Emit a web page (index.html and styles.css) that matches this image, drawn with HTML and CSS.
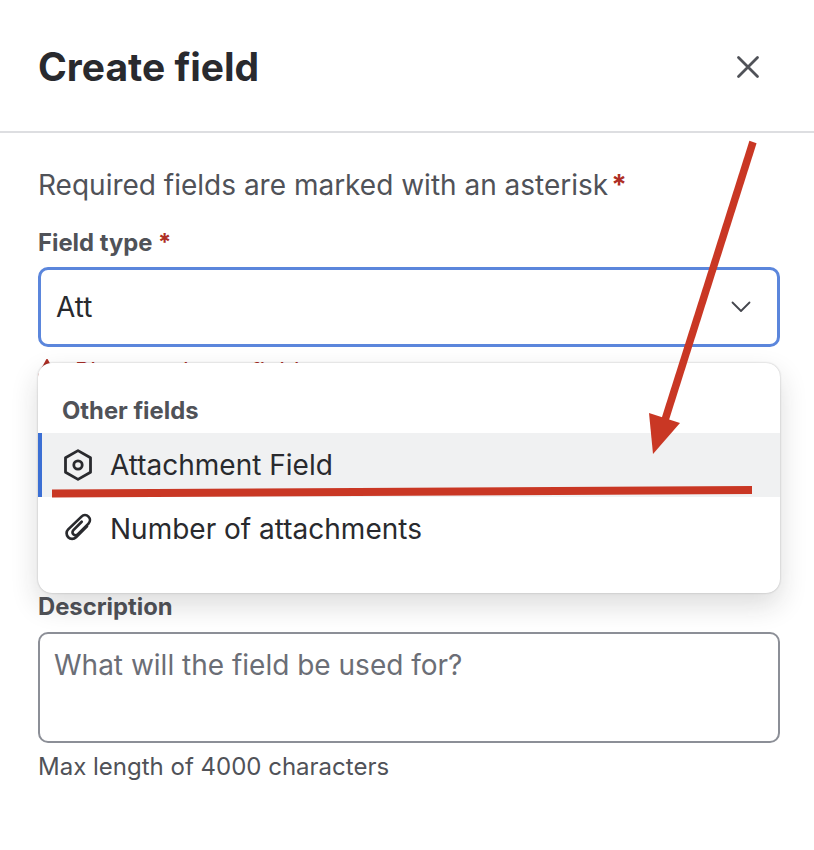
FILE: index.html
```html
<!DOCTYPE html>
<html lang="en">
<head>
    <meta charset="UTF-8">
    <meta name="viewport" content="width=device-width, initial-scale=1.0">
    <title>Create field</title>
    <link rel="stylesheet" href="styles.css">
</head>
<body>

    <div class="header">
        <h1>Create field</h1>
        <button class="close-btn" aria-label="Close">
            <svg width="24" height="24" viewBox="0 0 24 24" fill="none" stroke="#505258" stroke-width="2.8" stroke-linecap="round">
                <path d="M2.5 2.5 L21.5 21.5 M21.5 2.5 L2.5 21.5"/>
            </svg>
        </button>
    </div>

    <div class="content">
        <p class="required-note">Required fields are marked with an asterisk<span class="star first-star">*</span></p>

        <label class="label">Field type <span class="star">*</span></label>
        <div class="select">
            <span>Att</span>
            <svg width="20" height="12" viewBox="0 0 20 12" fill="none" stroke="#44464d" stroke-width="1.8" stroke-linecap="round" stroke-linejoin="round">
                <path d="M1.5 1.5 L10 10 L18.5 1.5"/>
            </svg>
        </div>

        <div class="error">
            <svg width="18" height="18" viewBox="0 0 18 18"><path d="M9 1 L17.5 17 H.5 Z" fill="#ae2e24" stroke="#ae2e24" stroke-linejoin="round" stroke-width="2"/></svg>
            <span>Please select a field type</span>
        </div>

        <label class="label description-label">Description</label>
        <div class="textarea">What will the field be used for?</div>
        <p class="helper">Max length of 4000 characters</p>

        <!-- Dropdown menu, lies over the form -->
        <div class="menu">
            <div class="menu-title">Other fields</div>
            <div class="menu-item active">
                <svg width="32" height="32" viewBox="0 0 32 32" fill="none" stroke="#292a2e" stroke-width="2.8" stroke-linejoin="round">
                    <path d="M16 1.6 L28.5 8.8 V23.2 L16 30.4 L3.5 23.2 V8.8 Z"/>
                    <circle cx="16" cy="16" r="4.2"/>
                </svg>
                <span>Attachment Field</span>
            </div>
            <div class="menu-item">
                <svg width="32" height="32" viewBox="0 0 32 32" fill="none" stroke="#292a2e" stroke-width="2.7" stroke-linecap="round" stroke-linejoin="round">
                    <path d="M25 13.2 L14 24.2 A5.5 5.5 0 0 1 6.2 16.4 L19.5 3.6 A4.95 4.95 0 0 1 26.5 10.6 L15.7 21.4 A3 3 0 0 1 11.4 17.1 L19.7 8.8"/>
                </svg>
                <span>Number of attachments</span>
            </div>
        </div>
    </div>

    <!-- Red annotation drawn on top of the screenshot -->
    <svg class="annotation" width="814" height="850" viewBox="0 0 814 850">
        <path d="M753 142 L665 420" stroke="#c93724" stroke-width="7.5" fill="none"/>
        <path d="M649 413 L680 423 L653 454 Z" fill="#c93724"/>
        <path d="M52 493.5 L752 490" stroke="#c93724" stroke-width="8" fill="none"/>
    </svg>

</body>
</html>
```

FILE: styles.css
```css
/* General styles */
body {
    margin: 0;
    width: 814px;
    height: 850px;
    position: relative;
    overflow: hidden;
    background: #ffffff;
    font-family: Inter, "Liberation Sans", sans-serif;
    color: #292a2e;
}

/* Header */
.header {
    height: 133px;
    box-sizing: border-box;
    padding: 2px 54px 0 38px;
    display: flex;
    justify-content: space-between;
    align-items: center;
    border-bottom: 2px solid #dddee1;
}

h1 {
    margin: 0;
    font-size: 39px;
    font-weight: 700;
    color: #292a2e;
}

.close-btn {
    display: flex;
    padding: 0;
    border: none;
    background: none;
}

/* Form */
.content {
    position: relative;
    padding: 0 34px 0 38px;
}

.required-note {
    margin: 0;
    padding-top: 35px;
    font-size: 28px;
    line-height: 34px;
    color: #505258;
}

.star {
    color: #ae2e24;
    font-weight: 700;
}

.first-star {
    margin-left: 3px;
}

.label {
    display: block;
    font-size: 23.8px;
    font-weight: 700;
    line-height: 28px;
    color: #505258;
}

.required-note + .label {
    margin-top: 27px;
}

.select {
    margin-top: 10px;
    height: 80px;
    box-sizing: border-box;
    padding: 0 26px 0 15px;
    display: flex;
    justify-content: space-between;
    align-items: center;
    border: 3px solid #5b86dc;
    border-radius: 10px;
    font-size: 28px;
}

.error {
    margin-top: 9px;
    height: 24px;
    display: flex;
    align-items: flex-start;
    gap: 19px;
    font-size: 23.8px;
    line-height: 29px;
    color: #ae2e24;
}

.error svg {
    margin-top: 3px;
}

.error span {
    margin-top: 1px;
}

.description-label {
    margin-top: 213px;
}

.textarea {
    margin-top: 11px;
    height: 111px;
    box-sizing: border-box;
    padding: 14px 14px;
    border: 2px solid #8c8f97;
    border-radius: 10px;
    font-size: 28px;
    line-height: 34px;
    color: #6b6e76;
}

.helper {
    margin: 10px 0 0;
    font-size: 24px;
    line-height: 28px;
    color: #505258;
}

/* Dropdown menu */
.menu {
    position: absolute;
    top: 230px;
    left: 38px;
    right: 34px;
    height: 230px;
    box-sizing: border-box;
    padding-top: 34px;
    background: #ffffff;
    border-radius: 14px;
    box-shadow: 0 0 2px rgba(30, 31, 33, 0.3), 0 12px 28px rgba(30, 31, 33, 0.16);
}

.menu-title {
    padding-left: 24px;
    height: 36px;
    font-size: 23.8px;
    font-weight: 700;
    line-height: 28px;
    color: #505258;
}

.menu-item {
    height: 64px;
    box-sizing: border-box;
    padding-left: 24px;
    display: flex;
    align-items: center;
    gap: 16px;
    font-size: 28px;
    color: #292a2e;
}

.menu-item.active {
    background: #f0f1f2;
    box-shadow: inset 4px 0 0 #3b6fd4;
}

/* Annotation */
.annotation {
    position: absolute;
    top: 0;
    left: 0;
}
```
